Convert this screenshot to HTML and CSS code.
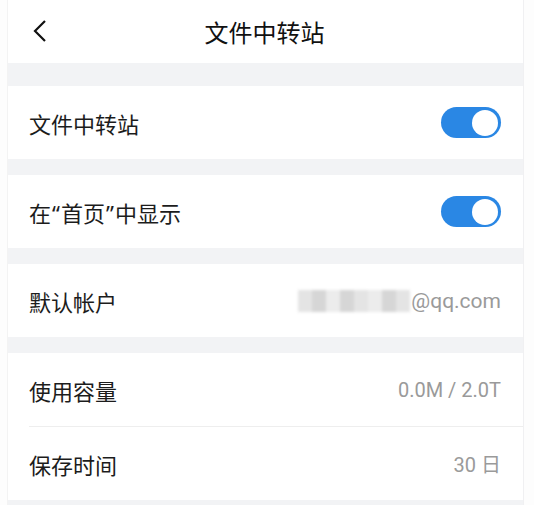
FILE: index.html
```html
<!DOCTYPE html>
<html lang="zh-CN">
<head>
<meta charset="utf-8">
<link rel="stylesheet" href="styles.css">
</head>
<body>
<div class="panel">
  <header class="header">
    <svg class="back" width="16" height="24" viewBox="0 0 16 24"><path d="M13 2 L3 12 L13 22" fill="none" stroke="#111" stroke-width="2.2"/></svg>
    <div class="title">文件中转站</div>
  </header>
  <div class="gap gap-first"></div>
  <div class="row">
    <span class="label">文件中转站</span>
    <span class="toggle"><span class="knob"></span></span>
  </div>
  <div class="gap"></div>
  <div class="row">
    <span class="label">在<span class="q">“</span>首页<span class="q">”</span>中显示</span>
    <span class="toggle"><span class="knob"></span></span>
  </div>
  <div class="gap"></div>
  <div class="row">
    <span class="label">默认帐户</span>
    <span class="value email"><span class="mosaic"><i class="m1"></i><i class="m2"></i><i class="m3"></i><i class="m2"></i><i class="m1"></i><i class="m3"></i><i class="m2"></i><i class="m1"></i></span>@qq.com</span>
  </div>
  <div class="gap"></div>
  <div class="row">
    <span class="label">使用容量</span>
    <span class="value">0.0M / 2.0T</span>
  </div>
  <div class="divider"></div>
  <div class="row">
    <span class="label">保存时间</span>
    <span class="value">30 日</span>
  </div>
  <div class="gap gap-last"></div>
</div>
</body>
</html>
```

FILE: styles.css
```css
html, body {
  margin: 0;
  padding: 0;
  background: #fdfdfd;
  height: 505px;
  overflow: hidden;
}
body {
  font-family: "Noto Sans CJK SC", "Noto Sans", sans-serif;
  color: #1c1c1c;
}
.panel {
  margin-left: 7px;
  width: 515px;
  background: #fff;
  border-left: 1px solid #f3f3f3;
  border-right: 1px solid #f0f0f2;
}
.header {
  height: 63px;
  display: flex;
  align-items: center;
  justify-content: center;
  position: relative;
}
.back {
  position: absolute;
  left: 24px;
  top: 19px;
}
.title {
  font-size: 24px;
  color: #111;
  margin-left: -2px;
}
.gap {
  height: 16px;
  background: #f2f3f5;
}
.gap-first {
  height: 23px;
}
.gap-last {
  height: 8px;
}
.row {
  height: 73px;
  display: flex;
  align-items: center;
  justify-content: space-between;
  padding: 0 22px 0 21px;
}
.label {
  font-size: 22px;
  color: #1c1c1c;
}
.q {
  font-family: "Noto Sans", sans-serif;
  display: inline-block;
  width: 10px;
  text-align: center;
}
.value {
  font-family: "Roboto", "Noto Sans CJK SC", sans-serif;
  font-size: 20px;
  color: #9a9a9a;
  display: flex;
  align-items: center;
}
.email {
  font-size: 21px;
}
.divider {
  height: 1px;
  background: #eeeeee;
  margin-left: 21px;
}
.toggle {
  width: 60px;
  height: 31px;
  border-radius: 16px;
  background: #2a87e4;
  display: flex;
  align-items: center;
  justify-content: flex-end;
  padding: 0 3px;
  box-sizing: border-box;
}
.knob {
  width: 26px;
  height: 26px;
  border-radius: 50%;
  background: #fff;
}
.mosaic {
  display: flex;
  height: 22px;
  width: 112px;
  filter: blur(1.5px);
  margin-right: 1px;
}
.mosaic i {
  flex: 1;
  display: block;
}
.m1 { background: #e4e4e4; }
.m2 { background: #d6d6d6; }
.m3 { background: #ececec; }
```
